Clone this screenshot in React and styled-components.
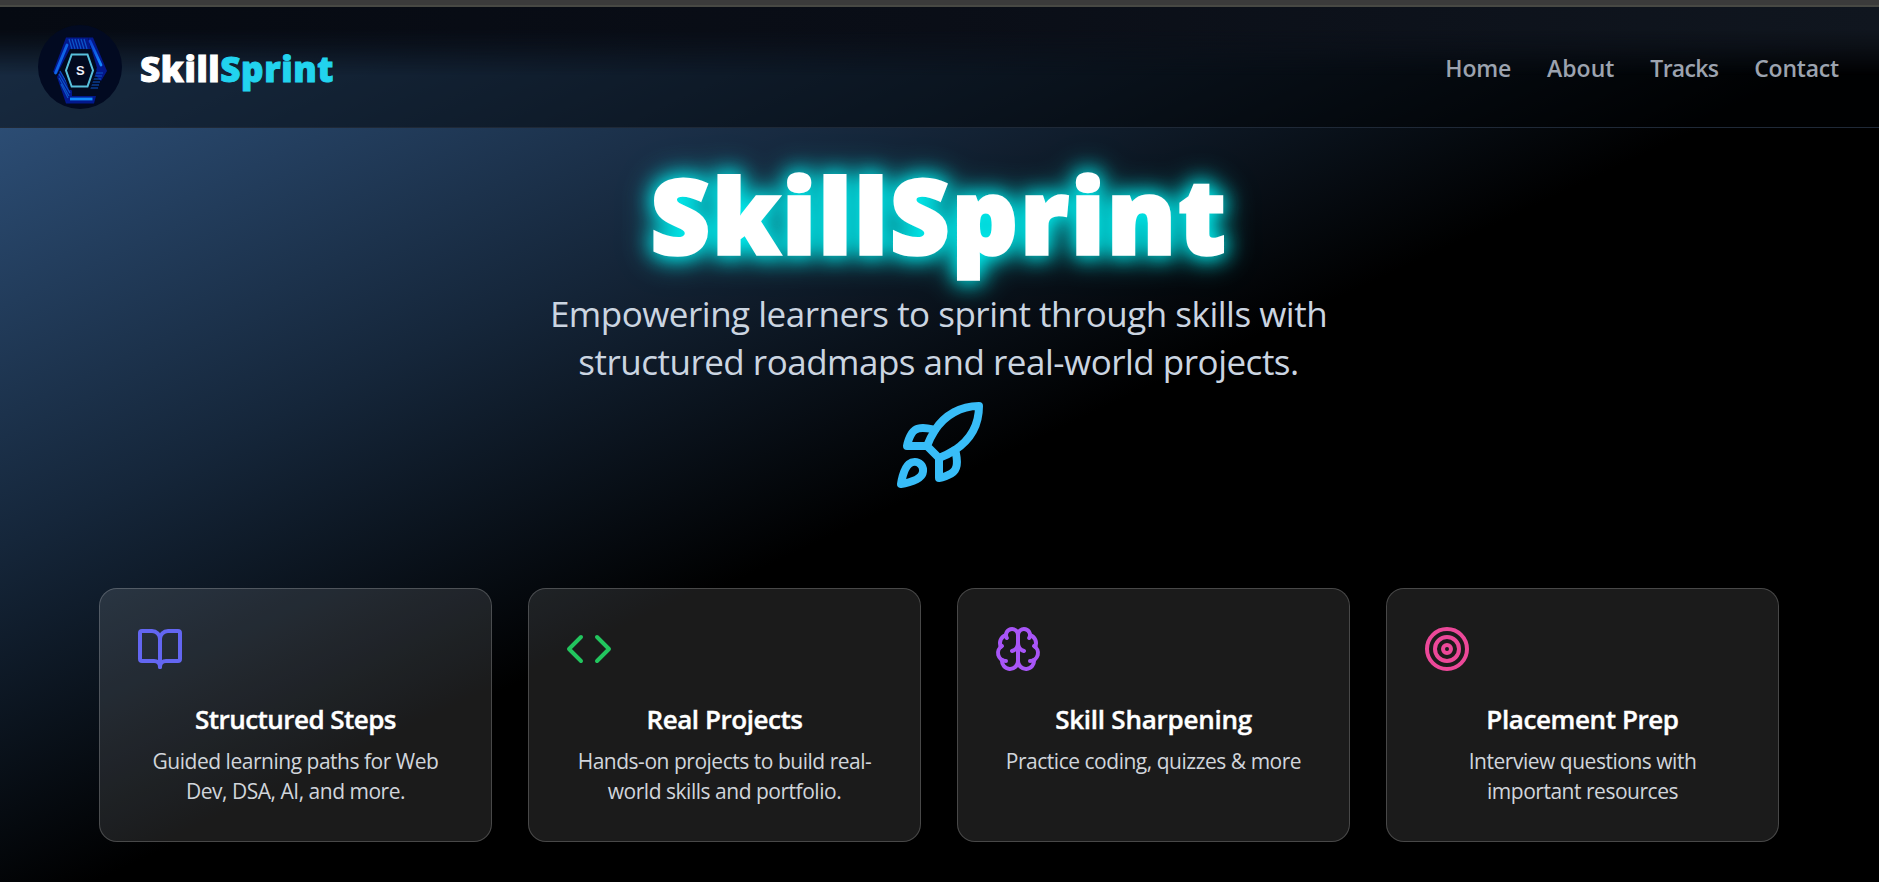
import React from "react";
import styled, { createGlobalStyle } from "styled-components";
import { Rocket, BookOpen, Code, Brain, Target } from "lucide-react";

const Global = createGlobalStyle`
  * { box-sizing: border-box; }
  body { margin: 0; background: #000; overflow: hidden; font-family: "Open Sans", "Noto Sans", sans-serif; }
  h1, h3, p { margin: 0; }
`;

const Page = styled.div`
  height: 882px;
  overflow: hidden;
  display: flex;
  flex-direction: column;
  background: linear-gradient(to bottom right, #30547f 2.6%, #15263a 31%, #000 52.5%);
`;

const TopEdge = styled.div`
  height: 7px;
  flex: none;
  background: linear-gradient(#3b3b3b 5px, #484944 5px);
`;

const Header = styled.header`
  position: relative;
  isolation: isolate;
  height: 121px;
  flex: none;
  display: flex;
  align-items: center;
  justify-content: space-between;
  padding: 0 40px 0 38px;
  border-bottom: 1px solid #1f2937;
  background: rgba(0, 2, 4, 0.5);

  &::before {
    content: "";
    position: absolute;
    inset: 0;
    z-index: -1;
    background: linear-gradient(to right, #060a12, #0a0e17 50%, #10161f);
    mask-image: linear-gradient(#000 22px, rgba(0, 0, 0, 0.75) 38px, transparent 68px);
  }
`;

const Brand = styled.div`
  display: flex;
  align-items: center;
  gap: 18px;
`;

const BrandName = styled.div`
  font-family: "Noto Sans", sans-serif;
  font-size: 35px;
  font-weight: 900;
  line-height: 48px;
  letter-spacing: 0.6px;
  padding-top: 4px;
  color: #fff;
  -webkit-text-stroke: 1px currentColor;
`;

const Accent = styled.span`
  color: #22d3ee;
`;

const Nav = styled.nav`
  display: flex;
  gap: 36px;
  padding-top: 2px;
`;

const NavLink = styled.a`
  font-size: 23px;
  font-weight: 600;
  line-height: 36px;
  letter-spacing: ${(p) => p.$spacing || "-0.2px"};
  color: #9ca3af;
`;

const Hero = styled.section`
  display: flex;
  flex-direction: column;
  align-items: center;
  flex: none;
  height: 460px;
  padding: 27px 2px 0 0;
`;

const Title = styled.h1`
  font-family: "Noto Sans", sans-serif;
  font-size: 102px;
  font-weight: 900;
  line-height: 120px;
  letter-spacing: 2.9px;
  padding-left: 2px;
  color: #fff;
  -webkit-text-stroke: 3.5px #fff;
  filter: drop-shadow(0 0 10px #00f4f4) drop-shadow(0 0 13px rgba(0, 220, 226, 0.75));
`;

const Tagline = styled.p`
  position: relative;
  width: 860px;
  margin-top: 15px;
  text-align: center;
  font-size: 35px;
  line-height: 48px;
  letter-spacing: -0.5px;
  color: #cbd5e1;
`;

const RocketBox = styled.div`
  margin-top: 12px;
  height: 96px;
  color: #38bdf8;
`;

const Cards = styled.section`
  display: grid;
  grid-template-columns: repeat(4, 393px);
  gap: 36px;
  padding-left: 99px;
`;

const Card = styled.article`
  height: 254px;
  border: 1px solid rgba(255, 255, 255, 0.2);
  border-radius: 18px;
  background: rgba(255, 255, 255, 0.105);
  padding: 36px;
  text-align: center;
`;

const IconBox = styled.div`
  height: 48px;
  margin-bottom: 30px;
  display: flex;
  color: ${(p) => p.$color};
`;

const CardTitle = styled.h3`
  font-size: 26px;
  font-weight: 600;
  line-height: 32px;
  color: #fff;
  -webkit-text-stroke: 0.4px #fff;
  letter-spacing: ${(p) => p.$spacing};
`;

const CardText = styled.p`
  margin: 11px -10px 0;
  font-size: 21px;
  line-height: 30px;
  letter-spacing: -0.48px;
  white-space: pre-line;
  color: #d1d5db;
`;

const Logo = () => (
  <svg width="84" height="84" viewBox="0 0 84 84">
    <defs>
      <linearGradient id="bar" x1="0" y1="0" x2="1" y2="1">
        <stop offset="0" stopColor="#0b3fd0" />
        <stop offset="1" stopColor="#1187ff" />
      </linearGradient>
    </defs>
    <circle cx="42" cy="42" r="42" fill="#020a21" />
    <g fill="#03188c">
      <path d="M28 12.500H50L53 24H32L19 49L15 47Z" />
      <path d="M50 12.500H55L69 46L63 56L55 48L59 43Z" />
      <path d="M28 78.500L19 52L22 46L34 66V71H58L56 78.500Z" />
    </g>
    <g fill="none" stroke="url(#bar)" strokeWidth="2.800" strokeLinecap="round">
      <path d="M17.500 48L29 20" />
      <path d="M52 16L63 40" />
    </g>
    <path d="M32 74H54.500" stroke="#128bfa" strokeWidth="2.800" />
    <g stroke="#0c55c8" strokeWidth="1.200">
      <path d="M31 14L34 24M34 14L37 24M37 14L40 24M40 14L43 24M43 14L46 24M46 14L49 24" />
      <path d="M54 48H65M53 51H64M52 54H63M51 57H62M50 60H61M50 63H60" />
      <path d="M22 46L33 65M21 49L32 68M21 53L31 71M23 59L30 73" />
    </g>
    <path d="M33.700 29.500H49.500L55 45.500L49.500 61.500H33.700L28 45.500Z" fill="#020a1f" stroke="#020a1f" strokeWidth="7" />
    <path d="M33.700 29.500H49.500L55 45.500L49.500 61.500H33.700L28 45.500Z" fill="#020a1f" stroke="#58c0dc" strokeWidth="2" />
    <text x="42.300" y="49.800" textAnchor="middle" fontFamily="Liberation Sans, sans-serif" fontWeight="700" fontSize="13" fill="#f1f1fa">S</text>
  </svg>
);

const cards = [
  { icon: BookOpen, color: "#6366f1", spacing: "-0.55px", title: "Structured Steps", text: "Guided learning paths for Web\nDev, DSA, AI, and more." },
  { icon: Code, color: "#22c55e", spacing: "-0.45px", title: "Real Projects", text: "Hands-on projects to build real-\nworld skills and portfolio." },
  { icon: Brain, color: "#a855f7", spacing: "-0.25px", title: "Skill Sharpening", text: "Practice coding, quizzes & more" },
  { icon: Target, color: "#ec4899", spacing: "-0.4px", title: "Placement Prep", text: "Interview questions with\nimportant resources" },
];

export default function App() {
  return (
    <Page>
      <Global />
      <TopEdge />
      <Header>
        <Brand>
          <Logo />
          <BrandName>Skill<Accent>Sprint</Accent></BrandName>
        </Brand>
        <Nav>
          <NavLink>Home</NavLink>
          <NavLink $spacing="0">About</NavLink>
          <NavLink $spacing="-0.7px">Tracks</NavLink>
          <NavLink>Contact</NavLink>
        </Nav>
      </Header>
      <Hero>
        <Title>SkillSprint</Title>
        <Tagline>Empowering learners to sprint through skills with<br />structured roadmaps and real-world projects.</Tagline>
        <RocketBox><Rocket size={96} /></RocketBox>
      </Hero>
      <Cards>
        {cards.map(({ icon: Icon, color, spacing, title, text }) => (
          <Card key={title}>
            <IconBox $color={color}><Icon size={48} /></IconBox>
            <CardTitle $spacing={spacing}>{title}</CardTitle>
            <CardText>{text}</CardText>
          </Card>
        ))}
      </Cards>
    </Page>
  );
}
